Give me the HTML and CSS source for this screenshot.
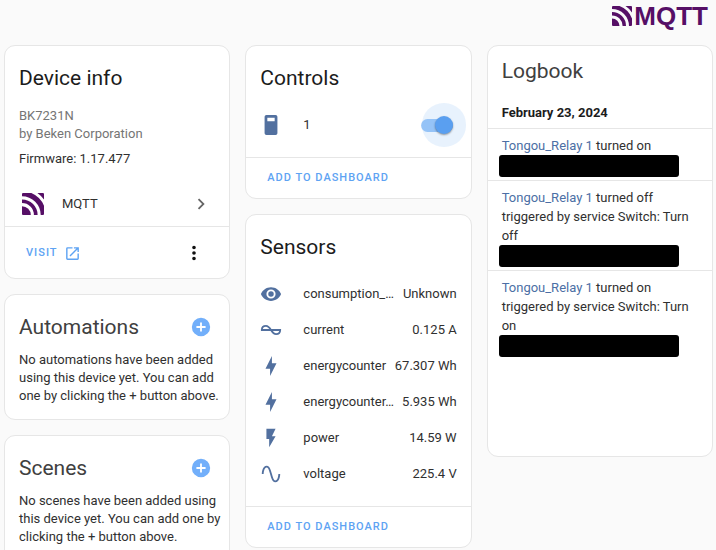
FILE: index.html
```html
<!DOCTYPE html>
<html lang="en">
<head>
  <meta charset="UTF-8" />
  <meta name="viewport" content="width=device-width, initial-scale=1.0"/>
  <title>Device info</title>
  <link rel="stylesheet" href="styles.css">
</head>
<body>
  <header class="page-header">
    <a href="#" class="brand" aria-label="MQTT">
      <svg class="brand-mark" viewBox="0 0 20 20" aria-hidden="true">
        <path d="M0 12.500A7.500 7.500 0 0 1 7.500 20H1a1 1 0 0 1-1-1z"/>
        <path d="M0 6v3.400A10.600 10.600 0 0 1 10.600 20h3.400A14 14 0 0 0 0 6z"/>
        <path d="M1 0a1 1 0 0 0-1 1v2A17 17 0 0 1 17 20h2a1 1 0 0 0 1-1v-6.500A21.400 21.400 0 0 0 7.500 0z"/>
        <path d="M13.500 0A24.100 24.100 0 0 1 20 6.500V1a1 1 0 0 0-1-1z"/>
      </svg>
      <span class="brand-name">MQTT</span>
    </a>
  </header>

  <main class="columns">
    <div class="column">
      <section class="card" aria-labelledby="deviceHeading">
        <h1 id="deviceHeading" class="card-title">Device info</h1>
        <div class="device-details">
          <p class="secondary">BK7231N</p>
          <p class="secondary">by Beken Corporation</p>
          <p class="firmware">Firmware: 1.17.477</p>
        </div>
        <a href="#" class="integration">
          <svg class="integration-mark" viewBox="0 0 20 20" aria-hidden="true">
            <path d="M0 12A8 8 0 0 1 8 20H1a1 1 0 0 1-1-1z"/>
            <path d="M0 5.800v3.400A10.800 10.800 0 0 1 10.800 20h3.400A14.200 14.200 0 0 0 0 5.800z"/>
            <path d="M1 0a1 1 0 0 0-1 1v2A17 17 0 0 1 17 20h2a1 1 0 0 0 1-1v-7.500A21.800 21.800 0 0 0 8.500 0z"/>
            <path d="M14 0A24.400 24.400 0 0 1 20 6V1a1 1 0 0 0-1-1z"/>
          </svg>
          <span class="integration-name">MQTT</span>
          <svg class="icon icon-muted" viewBox="0 0 24 24" aria-hidden="true">
            <path d="M8.590 16.580 13.170 12 8.590 7.410 10 6l6 6-6 6z"/>
          </svg>
        </a>
        <div class="card-actions device-actions">
          <a href="#" class="action">
            Visit
            <svg class="action-icon" viewBox="0 0 24 24" aria-hidden="true">
              <path d="M14 3v2h3.590l-9.830 9.830 1.410 1.410L19 6.410V10h2V3m-2 16H5V5h7V3H5a2 2 0 0 0-2 2v14a2 2 0 0 0 2 2h14a2 2 0 0 0 2-2v-7h-2z"/>
            </svg>
          </a>
          <button class="icon-button" aria-label="More options">
            <svg class="icon" viewBox="0 0 24 24" aria-hidden="true">
              <path d="M12 16a2 2 0 1 1 0 4 2 2 0 0 1 0-4m0-6a2 2 0 1 1 0 4 2 2 0 0 1 0-4m0-6a2 2 0 1 1 0 4 2 2 0 0 1 0-4z"/>
            </svg>
          </button>
        </div>
      </section>

      <section class="card" aria-labelledby="automationsHeading">
        <div class="card-header">
          <h2 id="automationsHeading" class="card-title card-title-soft">Automations</h2>
          <button class="icon-button add-button" aria-label="Add automation">
            <svg class="icon" viewBox="0 0 24 24" aria-hidden="true">
              <path d="M17 13h-4v4h-2v-4H7v-2h4V7h2v4h4m-5-9a10 10 0 1 0 0 20 10 10 0 0 0 0-20z"/>
            </svg>
          </button>
        </div>
        <p class="card-text">No automations have been added using this device yet. You can add one by clicking the + button above.</p>
      </section>

      <section class="card" aria-labelledby="scenesHeading">
        <div class="card-header">
          <h2 id="scenesHeading" class="card-title card-title-soft">Scenes</h2>
          <button class="icon-button add-button" aria-label="Add scene">
            <svg class="icon" viewBox="0 0 24 24" aria-hidden="true">
              <path d="M17 13h-4v4h-2v-4H7v-2h4V7h2v4h4m-5-9a10 10 0 1 0 0 20 10 10 0 0 0 0-20z"/>
            </svg>
          </button>
        </div>
        <p class="card-text">No scenes have been added using this device yet. You can add one by clicking the + button above.</p>
      </section>
    </div>

    <div class="column">
      <section class="card" aria-labelledby="controlsHeading">
        <h2 id="controlsHeading" class="card-title">Controls</h2>
        <div class="entities">
          <div class="entity">
            <svg class="icon icon-state" viewBox="0 0 24 24" aria-hidden="true">
              <path d="M7 1h10a2 2 0 0 1 2 2v18a2 2 0 0 1-2 2H7a2 2 0 0 1-2-2V3a2 2 0 0 1 2-2m1 3v4h8V4z"/>
            </svg>
            <label for="relaySwitch" class="entity-name">1</label>
            <input type="checkbox" role="switch" id="relaySwitch" class="switch" checked>
          </div>
        </div>
        <div class="card-actions">
          <button class="action">Add to dashboard</button>
        </div>
      </section>

      <section class="card" aria-labelledby="sensorsHeading">
        <h2 id="sensorsHeading" class="card-title">Sensors</h2>
        <div class="entities">
          <div class="entity">
            <svg class="icon icon-state" viewBox="0 0 24 24" aria-hidden="true">
              <path d="M12 9a3 3 0 1 0 0 6 3 3 0 0 0 0-6m0 8a5 5 0 1 1 0-10 5 5 0 0 1 0 10m0-12.500C7 4.500 2.730 7.610 1 12c1.730 4.390 6 7.500 11 7.500s9.270-3.110 11-7.500c-1.730-4.390-6-7.500-11-7.500z"/>
            </svg>
            <span class="entity-name">consumption_…</span>
            <span class="entity-value">Unknown</span>
          </div>
          <div class="entity">
            <svg class="icon icon-state" viewBox="0 0 24 24" aria-hidden="true">
              <path fill="none" stroke="currentColor" stroke-width="2" d="M1 12h21c0 3-2 4.500-4.500 4.500S13.500 14.500 12 12 9 7.500 6.500 7.500 2 9 2 12"/>
            </svg>
            <span class="entity-name">current</span>
            <span class="entity-value">0.125 A</span>
          </div>
          <div class="entity">
            <svg class="icon icon-state" viewBox="0 0 24 24" aria-hidden="true">
              <path d="M11 15H6l7-14v8h5l-7 14z"/>
            </svg>
            <span class="entity-name">energycounter</span>
            <span class="entity-value">67.307 Wh</span>
          </div>
          <div class="entity">
            <svg class="icon icon-state" viewBox="0 0 24 24" aria-hidden="true">
              <path d="M11 15H6l7-14v8h5l-7 14z"/>
            </svg>
            <span class="entity-name">energycounter…</span>
            <span class="entity-value">5.935 Wh</span>
          </div>
          <div class="entity">
            <svg class="icon icon-state" viewBox="0 0 24 24" aria-hidden="true">
              <path d="M7 2v11h3v9l7-12h-4l4-8z"/>
            </svg>
            <span class="entity-name">power</span>
            <span class="entity-value">14.59 W</span>
          </div>
          <div class="entity">
            <svg class="icon icon-state" viewBox="0 0 24 24" aria-hidden="true">
              <path d="M16.500 21c-3 0-4.190-4.240-5.450-8.720C10.140 9.040 9 5 7.500 5 4.110 5 4 11.930 4 12H2c0-.370.060-9 5.500-9 3 0 4.210 4.250 5.470 8.740C13.830 14.800 15 19 16.500 19c3.440 0 3.530-6.930 3.530-7h2c0 .370-.060 9-5.530 9z"/>
            </svg>
            <span class="entity-name">voltage</span>
            <span class="entity-value">225.4 V</span>
          </div>
        </div>
        <div class="card-actions">
          <button class="action">Add to dashboard</button>
        </div>
      </section>
    </div>

    <div class="column">
      <section class="card logbook" aria-labelledby="logbookHeading">
        <h2 id="logbookHeading" class="card-title card-title-soft">Logbook</h2>
        <h3 class="log-date">February 23, 2024</h3>
        <div class="log-entry">
          <p><a href="#">Tongou_Relay 1</a> turned on</p>
          <div class="redacted"></div>
        </div>
        <div class="log-entry">
          <p><a href="#">Tongou_Relay 1</a> turned off triggered by service Switch: Turn off</p>
          <div class="redacted"></div>
        </div>
        <div class="log-entry">
          <p><a href="#">Tongou_Relay 1</a> turned on triggered by service Switch: Turn on</p>
          <div class="redacted"></div>
        </div>
      </section>
    </div>
  </main>
</body>
</html>
```
FILE: styles.css
```css
:root {
  --color-primary: #5ea3f3;
  --color-state: #52709f;
  --color-text: #303030;
  --color-heading: #1c1c1c;
  --color-secondary: #757575;
  --color-divider: #e6e6e6;
  --color-bg: #fafafa;
  --color-surface: #fff;
  --color-brand: #560f66;
}

* {
  box-sizing: border-box;
}

body {
  font-family: Roboto, sans-serif;
  font-size: 13px;
  line-height: 18px;
  background-color: var(--color-bg);
  color: var(--color-text);
  margin: 0;
  padding: 0 3px 12px 4px;
}

h1,
h2,
h3,
p {
  margin: 0;
}

a {
  color: inherit;
  text-decoration: none;
}

button {
  font: inherit;
  background: none;
  border: none;
  cursor: pointer;
}

.page-header {
  display: flex;
  justify-content: flex-end;
  height: 45px;
  padding: 4px 5px 0 0;
}

.brand {
  display: flex;
  gap: 2px;
  height: 24px;
  color: var(--color-brand);
}

.brand-mark {
  width: 20px;
  height: 20px;
  margin-top: 2px;
  fill: currentColor;
}

.brand-name {
  font-family: "Liberation Sans", sans-serif;
  font-size: 26px;
  font-weight: 700;
  line-height: 24px;
}

.columns {
  display: grid;
  grid-template-columns: repeat(3, minmax(0, 1fr));
  gap: 15px;
  align-items: start;
}

.column {
  display: grid;
  grid-template-columns: minmax(0, 1fr);
  gap: 15px;
}

.card {
  background: var(--color-surface);
  border: 1px solid var(--color-divider);
  border-radius: 11px;
}

.card-title {
  padding: 16px 14px 13px;
  color: var(--color-heading);
  font-size: 21px;
  font-weight: 400;
  line-height: 32px;
}

.card-title-soft {
  color: #404040;
}

.device-details {
  padding: 0 14px;
}

.secondary {
  color: var(--color-secondary);
}

.firmware {
  padding-top: 7px;
}

.integration {
  display: flex;
  align-items: center;
  height: 44px;
  margin-top: 14px;
  padding: 0 17px;
}

.integration-mark {
  width: 22px;
  height: 22px;
  fill: var(--color-brand);
}

.integration-name {
  flex: 1;
  padding-left: 18px;
}

.icon {
  display: block;
  width: 22px;
  height: 22px;
  flex: none;
  fill: currentColor;
}

.icon-muted {
  color: #666;
}

.icon-state {
  color: var(--color-state);
}

.card-actions {
  display: flex;
  align-items: center;
  justify-content: space-between;
  padding: 4px 14px;
  border-top: 1px solid var(--color-divider);
}

.device-actions {
  padding: 10px 19px 9px 14px;
}

.action {
  display: flex;
  align-items: center;
  gap: 6px;
  height: 32px;
  padding: 0 7px;
  color: var(--color-primary);
  font-size: 11px;
  font-weight: 500;
  letter-spacing: 1px;
  text-transform: uppercase;
}

.action-icon {
  width: 17px;
  height: 17px;
  fill: currentColor;
}

.icon-button {
  padding: 5px;
  color: #111;
}

.card-header {
  display: flex;
  align-items: center;
  justify-content: space-between;
  padding: 16px 12px 8px 0;
}

.card-header .card-title {
  padding: 0 14px;
}

.add-button {
  color: #72affa;
}

.card-text {
  padding: 0 4px 14px 14px;
}

.entities {
  padding: 0 14px 14px;
}

.entity {
  display: flex;
  align-items: center;
  height: 36px;
}

.entity-name {
  flex: 1;
  overflow: hidden;
  padding-left: 21px;
  text-overflow: ellipsis;
  white-space: nowrap;
}

.entity-value {
  padding-left: 4px;
  white-space: nowrap;
}

.switch {
  appearance: none;
  display: flex;
  align-items: center;
  justify-content: flex-end;
  width: 32px;
  height: 13px;
  margin: 0 4px;
  border-radius: 7px;
  background: #9fc9f8;
  cursor: pointer;
}

.switch::before {
  content: "";
  flex: none;
  width: 18px;
  height: 18px;
  border-radius: 50%;
  background: #5a9ff0;
  box-shadow: 0 1px 2px rgba(0, 0, 0, 0.4), 0 0 0 13px rgba(94, 163, 243, 0.14);
}

.switch:not(:checked) {
  justify-content: flex-start;
}

.logbook {
  min-height: 412px;
}

.logbook .card-title {
  padding: 9px 14px;
}

.log-date {
  padding: 8px 14px 6px;
  color: var(--color-heading);
  font-size: 13px;
  font-weight: 700;
}

.log-entry {
  padding: 7px 14px 3px 11px;
  border-top: 1px solid var(--color-divider);
  line-height: 19px;
}

.log-entry p {
  padding-left: 3px;
}

.log-entry a {
  color: #4c6fa5;
}

.redacted {
  width: 180px;
  max-width: 100%;
  height: 22px;
  border-radius: 3px;
  background: #000;
}
```
